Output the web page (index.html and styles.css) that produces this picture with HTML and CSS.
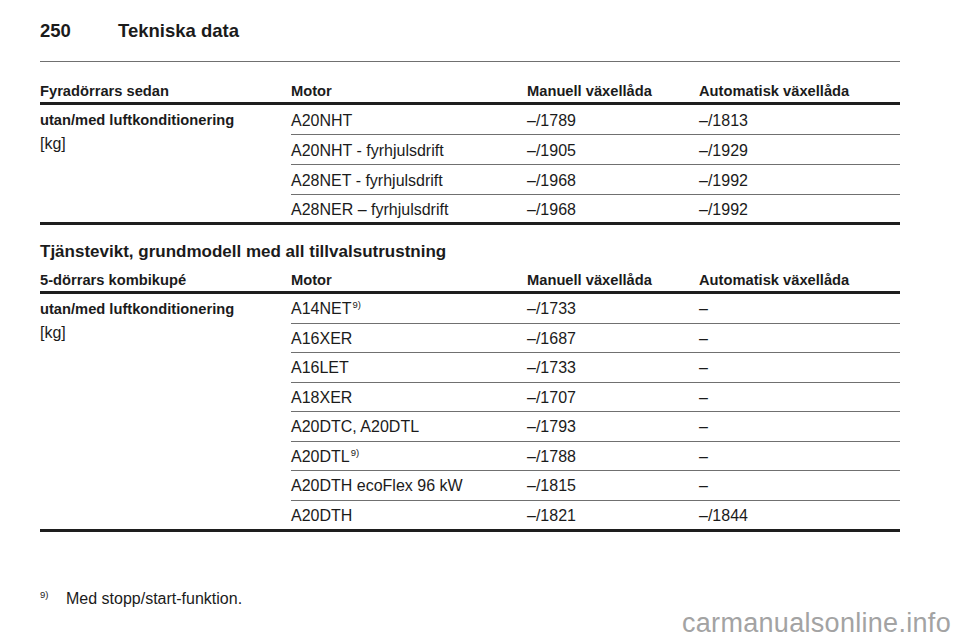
FILE: index.html
```html
<!DOCTYPE html>
<html lang="sv">
<head>
<meta charset="utf-8">
<title>Tekniska data</title>
<link rel="stylesheet" href="styles.css">
</head>
<body>
<div class="page">
  <header class="page-head">
    <span class="page-num">250</span>
    <span class="page-title">Tekniska data</span>
  </header>
  <div class="rule"></div>

  <table class="spec first">
    <colgroup><col class="c1"><col class="c2"><col class="c3"><col class="c4"></colgroup>
    <thead>
      <tr><th>Fyradörrars sedan</th><th>Motor</th><th>Manuell växellåda</th><th>Automatisk växellåda</th></tr>
    </thead>
    <tbody>
      <tr><td class="label" rowspan="4"><div class="label-main">utan/med luftkonditionering</div><div class="label-unit">[kg]</div></td><td>A20NHT</td><td>–/1789</td><td>–/1813</td></tr>
      <tr><td>A20NHT - fyrhjulsdrift</td><td>–/1905</td><td>–/1929</td></tr>
      <tr><td>A28NET - fyrhjulsdrift</td><td>–/1968</td><td>–/1992</td></tr>
      <tr class="last"><td>A28NER – fyrhjulsdrift</td><td>–/1968</td><td>–/1992</td></tr>
    </tbody>
  </table>

  <h2 class="section-title">Tjänstevikt, grundmodell med all tillvalsutrustning</h2>

  <table class="spec second">
    <colgroup><col class="c1"><col class="c2"><col class="c3"><col class="c4"></colgroup>
    <thead>
      <tr><th>5-dörrars kombikupé</th><th>Motor</th><th>Manuell växellåda</th><th>Automatisk växellåda</th></tr>
    </thead>
    <tbody>
      <tr><td class="label" rowspan="8"><div class="label-main">utan/med luftkonditionering</div><div class="label-unit">[kg]</div></td><td>A14NET<sup>9)</sup></td><td>–/1733</td><td>–</td></tr>
      <tr><td>A16XER</td><td>–/1687</td><td>–</td></tr>
      <tr><td>A16LET</td><td>–/1733</td><td>–</td></tr>
      <tr><td>A18XER</td><td>–/1707</td><td>–</td></tr>
      <tr><td>A20DTC, A20DTL</td><td>–/1793</td><td>–</td></tr>
      <tr><td>A20DTL<sup>9)</sup></td><td>–/1788</td><td>–</td></tr>
      <tr><td>A20DTH ecoFlex 96 kW</td><td>–/1815</td><td>–</td></tr>
      <tr class="last"><td>A20DTH</td><td>–/1821</td><td>–/1844</td></tr>
    </tbody>
  </table>

  <p class="footnote"><span class="fn-mark">9)</span><span class="fn-text">Med stopp/start-funktion.</span></p>
</div>
<div class="watermark">carmanualsonline.info</div>
</body>
</html>
```

FILE: styles.css
```css
html, body {
  margin: 0;
  padding: 0;
  width: 960px;
  height: 642px;
  overflow: hidden;
  background: #ffffff;
}

body {
  position: relative;
  font-family: "Liberation Sans", Arial, sans-serif;
  color: #1b1b1b;
}

.page {
  padding: 20px 0 0 40px;
  width: 860px;
}

.page-head {
  display: flex;
  font-weight: bold;
  font-size: 18.5px;
  line-height: 22px;
}

.page-num {
  width: 78px;
}

.rule {
  margin-top: 19px;
  height: 1px;
  background: #707070;
}

.spec {
  width: 860px;
  table-layout: fixed;
  border-collapse: separate;
  border-spacing: 0;
  border-bottom: 3px solid #1e1e1e;
}

.c1 { width: 251px; }
.c2 { width: 236px; }
.c3 { width: 172px; }
.c4 { width: 201px; }

.spec th {
  text-align: left;
  font-weight: bold;
  font-size: 14.7px;
  line-height: 17px;
  padding: 0 0 2px 0;
  border-bottom: 3px solid #1e1e1e;
  vertical-align: bottom;
  white-space: nowrap;
}

.first th { padding-top: 21px; }
.second th { padding-top: 10px; }

.spec td {
  font-size: 16px;
  padding: 2px 0 0 0;
  vertical-align: top;
  border-bottom: 1px solid #707070;
  white-space: nowrap;
}

.first td { line-height: 27px; }
.second td { line-height: 26.5px; }

.first tr.last td { line-height: 25px; }
.second tr.last td { line-height: 26.5px; }

.spec tr.last td,
.spec td.label {
  border-bottom: none;
}

.label-main {
  font-weight: bold;
  font-size: 14.7px;
}

.label-unit {
  font-size: 16px;
  line-height: 20px;
}

sup {
  font-size: 9.5px;
  line-height: 0;
  vertical-align: 6px;
  margin-left: 1px;
}

.section-title {
  margin: 17px 0 0 0;
  font-size: 17px;
  line-height: 20px;
  font-weight: bold;
}

.footnote {
  margin: 58px 0 0 0;
  display: flex;
  font-size: 16px;
  line-height: 17px;
}

.fn-mark {
  width: 26px;
  font-size: 9.5px;
  line-height: 10px;
}

.watermark {
  position: absolute;
  left: 682px;
  top: 608px;
  font-family: "Liberation Sans", Arial, sans-serif;
  font-size: 27px;
  letter-spacing: 0.3px;
  line-height: 30px;
  color: #a3a3a3;
  white-space: nowrap;
}
```
